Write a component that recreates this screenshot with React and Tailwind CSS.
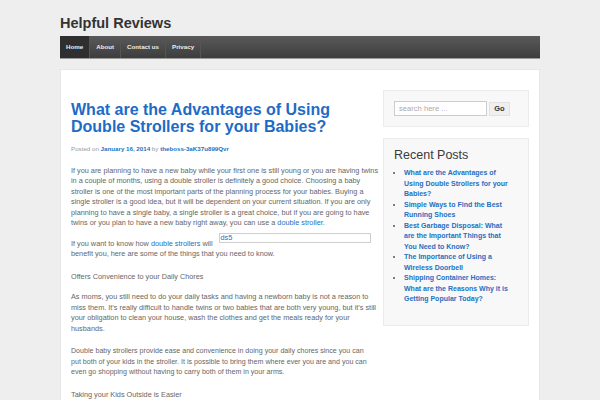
import React from 'react';

const navItems = ['Home', 'About', 'Contact us', 'Privacy'];

const recentPosts = [
    'What are the Advantages of Using Double Strollers for your Babies?',
    'Simple Ways to Find the Best Running Shoes',
    'Best Garbage Disposal: What are the Important Things that You Need to Know?',
    'The Importance of Using a Wireless Doorbell',
    'Shipping Container Homes: What are the Reasons Why it is Getting Popular Today?',
];

const Link = ({ children }) => <a className="text-[#2470c2]">{children}</a>;

const App = () => {
    return (
        <div className="h-[400px] overflow-hidden bg-[#eeeeee] font-['Liberation_Sans',Arial,sans-serif]">
            <div className="w-[480px] mx-auto pt-[15px]">
                <h1 className="text-[14.5px] leading-[17px] font-bold text-[#333] mb-[4px]">Helpful Reviews</h1>

                <nav className="h-[23px] flex bg-gradient-to-b from-[#5a5a5a] to-[#3d3d3d] border-b border-[#9a9a9a]">
                    {navItems.map((item, i) => (
                        <a
                            key={item}
                            className={`flex items-center px-[6px] text-[6.2px] font-bold text-[#eeeeee] border-r border-[#555] ${i === 0 ? 'bg-[#2f2f2f]' : ''}`}
                        >
                            {item}
                        </a>
                    ))}
                </nav>

                <div className="mt-[10px] bg-white border border-[#e6e6e6] flex pl-[10px] pr-[10px] pb-[20px]">
                    <main className="w-[310px] shrink-0 pt-[31px] text-[7.3px] leading-[10.5px] text-[#666666]">
                        <h2 className="text-[16px] leading-[17px] font-bold text-[#1e6bc6]">
                            What are the Advantages of Using Double Strollers for your Babies?
                        </h2>
                        <div className="mt-[9px] text-[6.2px] leading-[10.5px] text-[#999]">
                            Posted on <span className="font-bold text-[#2470c2]">January 16, 2014</span> by{' '}
                            <span className="font-bold text-[#2470c2]">theboss-3aK37u899Qvr</span>
                        </div>

                        <p className="mt-[11px]">
                            If you are planning to have a new baby while your first one is still young or you are having twins in a couple of months, using a double stroller is definitely a good choice. Choosing a baby stroller is one of the most important parts of the planning process for your babies. Buying a single stroller is a good idea, but it will be dependent on your current situation. If you are only planning to have a single baby, a single stroller is a great choice, but if you are going to have twins or you plan to have a new baby right away, you can use a <Link>double stroller</Link>.
                        </p>
                        <p className="mt-[4px]">
                            If you want to know how <Link>double strollers</Link> will
                            <span className="inline-block overflow-hidden align-baseline w-[152px] h-[10px] mb-[3px] ml-[6px] border border-[#cfcfcf] px-[1px] leading-[8px] text-[#2470c2]">
                                ds5
                            </span>
                            <br />
                            benefit you, here are some of the things that you need to know.
                        </p>
                        <p className="mt-[12px]">Offers Convenience to your Daily Chores</p>
                        <p className="mt-[10px]">
                            As moms, you still need to do your daily tasks and having a newborn baby is not a reason to miss them. It’s really difficult to handle twins or two babies that are both very young, but it’s still your obligation to clean your house, wash the clothes and get the meals ready for your husbands.
                        </p>
                        <p className="mt-[12px] text-[7.1px]">
                            Double baby strollers provide ease and convenience in doing your daily chores since you can
                            <br />
                            put both of your kids in the stroller. It is possible to bring them where ever you are and you can
                            <br />
                            even go shopping without having to carry both of them in your arms.
                        </p>
                        <p className="mt-[12px]">Taking your Kids Outside is Easier</p>
                    </main>

                    <aside className="w-[146px] shrink-0 ml-auto pt-[20px]">
                        <div className="bg-[#f8f8f8] border border-[#ececec] p-[10px] flex items-center gap-[2px]">
                            <div className="w-[93px] h-[15px] bg-white border border-[#cccccc] flex items-center px-[4px] text-[7.6px] text-[#aaa]">
                                search here ...
                            </div>
                            <button className="w-[21px] h-[14px] bg-[#efefef] border border-[#e2e2e2] text-[7.5px] font-bold text-[#333]">
                                Go
                            </button>
                        </div>

                        <div className="mt-[11px] bg-[#f8f8f8] border border-[#ececec] px-[10px] pt-[8px] pb-[20px]">
                            <h3 className="text-[12.5px] leading-[16px] text-[#3a3a3a]">Recent Posts</h3>
                            <ul className="mt-[5px] w-[114px] list-disc pl-[10px] text-[7px] leading-[10.5px] font-bold text-[#2470c2] marker:text-[#555]">
                                {recentPosts.map((post) => (
                                    <li key={post}>{post}</li>
                                ))}
                            </ul>
                        </div>
                    </aside>
                </div>
            </div>
        </div>
    );
};

export default App;
